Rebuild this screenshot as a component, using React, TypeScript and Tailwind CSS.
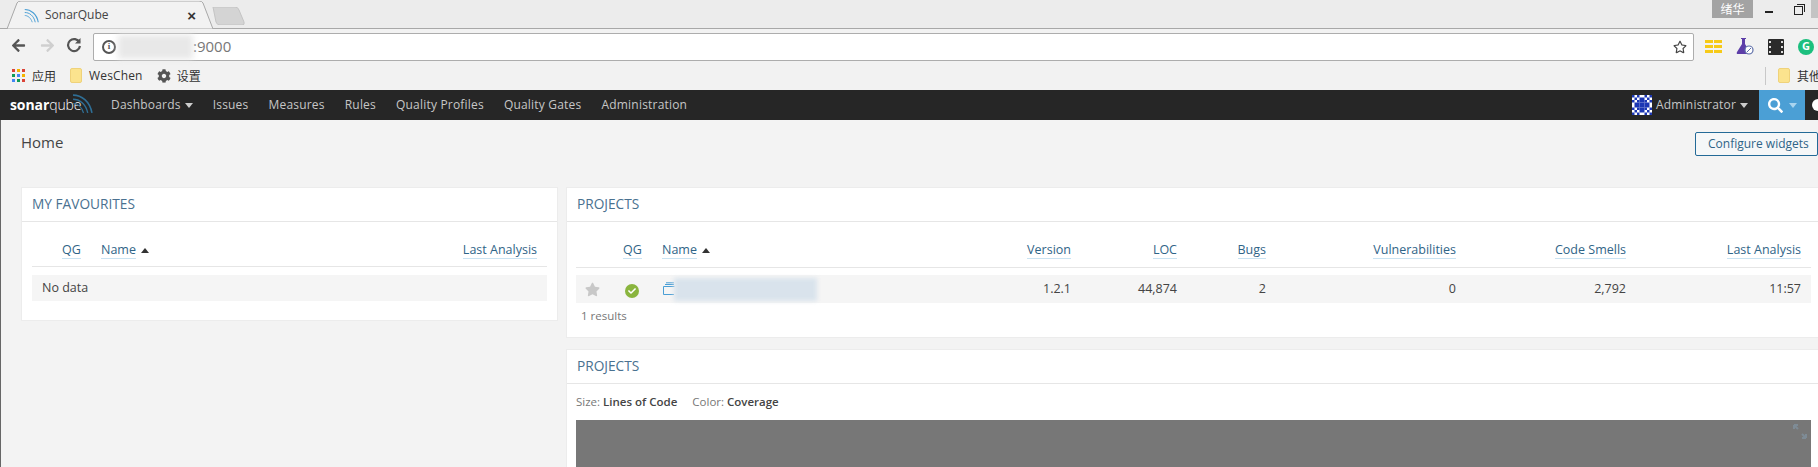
import React from "react";
import { FaArrowLeft, FaArrowRight, FaCheck, FaCog, FaRegStar, FaSearch, FaStar } from "react-icons/fa";

const OS = "font-['Open_Sans',sans-serif]";
const CJK = "font-['Noto_Sans_CJK_SC',sans-serif]";

function Caret({ up = false, color = "#ccc" }: { up?: boolean; color?: string }) {
  return (
    <svg width="8" height="5" viewBox="0 0 8 5" className="shrink-0">
      <path d={up ? "M0 5 L4 0 L8 5 Z" : "M0 0 L8 0 L4 5 Z"} fill={color} />
    </svg>
  );
}

function Arcs({ size, color }: { size: number; color: string }) {
  return (
    <svg width={size} height={size} viewBox="0 0 20 20" fill="none" stroke={color}>
      <path d="M1 2 C9 2 17 8 19 19" strokeWidth="1.5" />
      <path d="M1 6 C7 6 13 10 15 19" strokeWidth="1.3" />
      <path d="M1 10 C5 10 9 13 11 19" strokeWidth="1.1" />
    </svg>
  );
}

function Folder({ className = "" }: { className?: string }) {
  return <div className={`w-[12px] h-[15px] rounded-[2px] bg-[#fbe38e] border border-[#efd27a] ${className}`} />;
}

function Avatar() {
  const cells: React.ReactNode[] = [];
  const map = ["10100101", "01011010", "10111101", "01111110", "01111110", "10111101", "01011010", "10100101"];
  map.forEach((row, y) =>
    row.split("").forEach((c, x) => {
      if (c === "1") cells.push(<rect key={`${x}-${y}`} x={x * 2.5} y={y * 2.5} width="2.5" height="2.5" fill="#1c37b4" />);
    })
  );
  return (
    <svg width="20" height="20" viewBox="0 0 20 20" className="bg-white shrink-0">
      {cells}
    </svg>
  );
}

function TableHead({ children }: { children: React.ReactNode }) {
  return <span className="text-[#2f6487] border-b border-[#cae3f2] leading-[17px]">{children}</span>;
}

function Card({ title, className = "", children }: { title: string; className?: string; children: React.ReactNode }) {
  return (
    <section className={`bg-white border border-[#ececec] ${className}`}>
      <div className="h-[34px] border-b border-[#e6e6e6] pl-[10px] flex items-center text-[13.7px] text-[#4a7190] uppercase">
        {title}
      </div>
      {children}
    </section>
  );
}

function ChromeBars() {
  return (
    <header className="shrink-0">
      <div className="h-[29px] bg-[#ececec] border-b border-[#a8a8a8] flex">
        <div className="relative ml-[7px] w-[206px] h-[28px] mt-px flex items-center pl-[17px]">
          <svg className="absolute inset-0" width="206" height="28" viewBox="0 0 206 28">
            <path d="M0 28 L10 2 Q11 0 14 0 L192 0 Q195 0 196 2 L206 28 Z" fill="#f2f2f2" stroke="#a8a8a8" />
          </svg>
          <div className="relative flex items-center gap-[6px] w-full">
            <Arcs size={15} color="#4b9fd5" />
            <span className={`${OS} text-[12px] text-[#444]`}>SonarQube</span>
            <span className="ml-auto mr-[17px] text-[#333] text-[15px] font-bold leading-none font-['Liberation_Sans',sans-serif]">×</span>
          </div>
        </div>
        <svg width="36" height="18" viewBox="0 0 36 18" className="mt-[7px] -ml-[2px]">
          <path d="M2 0 L24 0 Q27 0 28 3 L33 15 Q34 18 31 18 L9 18 Q6 18 5 15 Z" fill="#d4d4d4" stroke="#c4c4c4" />
        </svg>
        <div className="ml-auto flex h-[18px]">
          <div className={`w-[41px] bg-[#a3a3a3] flex items-center justify-center text-[12px] text-white ${CJK}`}>绪华</div>
          <div className="w-[32px] flex items-center justify-center">
            <div className="w-[8px] h-[2px] bg-[#222] translate-y-[3px]" />
          </div>
          <div className="w-[26px] flex items-center justify-center">
            <div className="relative w-[9px] h-[9px] border border-[#222] translate-y-[1px]">
              <div className="absolute -top-[3px] -right-[3px] w-[8px] h-[8px] border-t border-r border-[#222]" />
            </div>
          </div>
          <div className="w-[7px] bg-[#c4c4c4]" />
        </div>
      </div>
      <div className="h-[32px] bg-[#f2f2f2] flex items-center">
        <div className="w-[93px] flex items-center text-[15px] pl-[11px] gap-[14px]">
          <FaArrowLeft className="text-[#555]" />
          <FaArrowRight className="text-[#cfcfcf]" />
          <svg width="16" height="16" viewBox="0 0 16 16" fill="none" stroke="#555" strokeWidth="2.2" className="-ml-[3px]">
            <path d="M13.5 5.5 A6 6 0 1 0 14 9" />
            <path d="M14.5 1 V6.5 H9" fill="#555" stroke="none" />
          </svg>
        </div>
        <div className="relative w-[1601px] h-[28px] mt-[3px] bg-white border border-[#adadad] rounded-[2px] flex items-center pl-[8px]">
          <div className="w-[14px] h-[14px] rounded-full border-2 border-[#555] flex items-center justify-center text-[9px] font-bold text-[#555] leading-none font-['Liberation_Serif',serif]">i</div>
          <div className="w-[75px] h-[24px] ml-[2px] bg-[#e8e8e8] blur-[3px] shrink-0" />
          <span className={`${OS} text-[15px] text-[#777]`}>:9000</span>
          <FaRegStar className="absolute right-[6px] top-[6px] text-[14px] text-[#444]" />
        </div>
        <div className="flex-1 relative h-[20px] mt-[3px]">
          <div className="flex items-center pl-[11px] h-full gap-[14px]">
            <svg width="17" height="13" viewBox="0 0 17 13" fill="#f6ca18" className="shrink-0">
              <rect x="0" y="0" width="8" height="3" />
              <rect x="9" y="0" width="8" height="3" />
              <rect x="0" y="5" width="8" height="3" />
              <rect x="9" y="5" width="8" height="3" />
              <rect x="0" y="10" width="8" height="3" />
              <rect x="9" y="10" width="8" height="3" />
            </svg>
            <svg width="18" height="17" viewBox="0 0 18 17" className="shrink-0">
              <path d="M5 0 H10 V1 H9 V6 L14 14 Q15 16 13 16 H2 Q0 16 1 14 L6 6 V1 H5 Z" fill="#5d3ea8" />
              <circle cx="13" cy="12" r="4" fill="#fff" stroke="#5d6ea8" strokeWidth="1.2" />
              <path d="M11 14 L15 10" stroke="#5d6ea8" />
            </svg>
            <svg width="16" height="16" viewBox="0 0 16 16" className="shrink-0">
              <rect width="16" height="16" rx="1" fill="#2b2b2b" />
              <g fill="#ddd">
                <rect x="1" y="2" width="2" height="2" />
                <rect x="1" y="7" width="2" height="2" />
                <rect x="1" y="12" width="2" height="2" />
                <rect x="13" y="2" width="2" height="2" />
                <rect x="13" y="7" width="2" height="2" />
                <rect x="13" y="12" width="2" height="2" />
              </g>
            </svg>
            <div className={`w-[16px] h-[16px] rounded-full bg-[#1cbf7e] flex items-center justify-center text-white text-[11px] font-bold shrink-0 ${OS}`}>G</div>
          </div>
        </div>
      </div>
      <div className="h-[29px] bg-[#f2f2f2] flex items-center pl-[12px] text-[12px] text-[#333]">
        <svg width="13" height="13" viewBox="0 0 13 13" className="shrink-0">
          {["#db4437", "#f4b400", "#db4437", "#0f9d58", "#4285f4", "#f4b400", "#4285f4", "#0f9d58", "#db4437"].map((c, i) => (
            <rect key={i} x={(i % 3) * 5} y={Math.floor(i / 3) * 5} width="3" height="3" fill={c} />
          ))}
        </svg>
        <span className={`ml-[7px] ${CJK}`}>应用</span>
        <Folder className="ml-[14px]" />
        <span className={`ml-[7px] tracking-[0.15px] ${OS}`}>WesChen</span>
        <FaCog className="ml-[14px] text-[14px] text-[#555]" />
        <span className={`ml-[6px] ${CJK}`}>设置</span>
        <div className="ml-auto flex items-center">
          <div className="w-px h-[18px] bg-[#c8c8c8]" />
          <Folder className="ml-[12px]" />
          <span className={`ml-[7px] whitespace-nowrap w-[21px] overflow-hidden ${CJK}`}>其他</span>
        </div>
      </div>
    </header>
  );
}

function NavBar() {
  const items = ["Issues", "Measures", "Rules", "Quality Profiles", "Quality Gates", "Administration"];
  return (
    <nav className={`h-[30px] bg-[#262626] flex items-center shrink-0 text-[12px] tracking-[0.2px] text-[#c6c6c6] ${OS}`}>
      <div className="relative w-[111px] pl-[10px] h-full flex items-center">
        <span className="text-[14px] leading-none text-white tracking-[-0.1px] pb-[1px]">
          <span className="font-bold">sonar</span>
          <span className="font-light">qube</span>
        </span>
        <div className="absolute left-[72px] top-[3px]">
          <Arcs size={21} color="#2f6f96" />
        </div>
      </div>
      <span className="flex items-center gap-[4px]">
        Dashboards <Caret />
      </span>
      <div className="flex gap-[20px] ml-[20px]">
        {items.map((t) => (
          <span key={t}>{t}</span>
        ))}
      </div>
      <div className="ml-auto flex items-center h-full">
        <Avatar />
        <span className="ml-[4px]">Administrator</span>
        <span className="ml-[4px]">
          <Caret />
        </span>
        <div className="ml-[11px] w-[46px] h-full bg-[#4b9fd5] flex items-center pl-[9px] gap-[6px]">
          <FaSearch className="text-white text-[15px]" />
          <Caret color="#a9d4ef" />
        </div>
        <div className="w-[13px] h-full flex items-center justify-end overflow-hidden">
          <div className="w-[12px] h-[12px] rounded-full bg-white translate-x-[6px] shrink-0" />
        </div>
      </div>
    </nav>
  );
}

function Dashboard() {
  return (
    <main className={`flex-1 min-h-0 bg-[#f3f3f3] border-l border-[#666] ${OS} text-[12.5px] text-[#444]`}>
      <div className="h-[67px] pl-[20px] flex items-start justify-between">
        <h1 className="text-[15px] font-normal leading-[20px] mt-[12px]">Home</h1>
        <button className="mt-[12px] h-[24px] w-[123px] shrink-0 pl-[12px] text-left bg-[#f5f7f8] border border-[#236a97] rounded-[2px] text-[#2f6487] text-[12px] whitespace-nowrap">
          Configure widgets
        </button>
      </div>
      <div className="flex items-start pl-[20px] gap-[8px]">
        <Card title="My Favourites" className="w-[537px] h-[134px] shrink-0">
          <div className="px-[10px]">
            <div className="h-[45px] pt-[19px] flex border-b border-[#e6e6e6] items-start">
              <div className="ml-[30px] w-[39px]"><TableHead>QG</TableHead></div>
              <div className="flex items-center gap-[5px]"><TableHead>Name</TableHead><Caret up color="#333" /></div>
              <div className="ml-auto pr-[10px]"><TableHead>Last Analysis</TableHead></div>
            </div>
            <div className="mt-[8px] h-[26px] bg-[#f5f5f5] pl-[10px] flex items-center">No data</div>
          </div>
        </Card>
        <div className="flex-1 flex flex-col gap-[11px] min-w-0">
          <Card title="Projects" className="h-[151px] border-r-0">
            <div className="pl-[9px] pr-[7px]">
              <div className="grid grid-cols-[47px_39px_338px_81px_106px_89px_190px_170px_175px] h-[46px] pt-[19px] border-b border-[#e6e6e6] items-start">
                <div />
                <div><TableHead>QG</TableHead></div>
                <div className="flex items-center gap-[5px]"><TableHead>Name</TableHead><Caret up color="#333" /></div>
                {["Version", "LOC", "Bugs", "Vulnerabilities", "Code Smells", "Last Analysis"].map((t) => (
                  <div key={t} className="text-right pr-[10px]"><TableHead>{t}</TableHead></div>
                ))}
              </div>
              <div className="grid grid-cols-[47px_39px_338px_81px_106px_89px_190px_170px_175px] mt-[7px] h-[28px] bg-[#f5f5f5] items-center">
                <div className="pl-[9px]"><FaStar className="text-[15px] text-[#c8c8c8]" /></div>
                <div className="pl-[2px]">
                  <div className="w-[14px] h-[14px] mt-[3px] rounded-full bg-[#8ab53e] flex items-center justify-center">
                    <FaCheck className="text-white text-[8px]" />
                  </div>
                </div>
                <div className="flex items-center">
                  <svg width="14" height="14" viewBox="0 0 14 14" fill="none" stroke="#4b9fd5" className="shrink-0">
                    <path d="M1.5 4.5 H12.5 M1.5 4.5 V12.5 H12" />
                    <path d="M3 2.5 H12 M4 0.8 H12" />
                  </svg>
                  <div className="w-[143px] h-[23px] -ml-[2px] bg-[#d9e3ec] blur-[2px]" />
                </div>
                {["1.2.1", "44,874", "2", "0", "2,792", "11:57"].map((t) => (
                  <div key={t} className="text-right pr-[10px]">{t}</div>
                ))}
              </div>
              <div className="mt-[3px] pl-[5px] text-[11.5px] text-[#777] leading-[20px]">1 results</div>
            </div>
          </Card>
          <Card title="Projects" className="border-r-0 h-[130px]">
            <div className="pl-[9px] pr-[7px]">
              <div className="h-[36px] flex items-center gap-[15px] text-[11.5px] text-[#777]">
                <span>Size: <span className="font-semibold text-[#444]">Lines of Code</span></span>
                <span>Color: <span className="font-semibold text-[#444]">Coverage</span></span>
              </div>
              <div className="relative h-[60px] bg-[#777]">
                <svg width="16" height="17" viewBox="0 0 16 17" fill="none" stroke="#7e8b95" strokeWidth="2" className="absolute right-[3px] top-[3px]">
                  <path d="M2 2 L6 6 M2 2 H6 M2 2 V6 M14 15 L10 11 M14 15 H10 M14 15 V11" />
                </svg>
              </div>
            </div>
          </Card>
        </div>
      </div>
    </main>
  );
}

export default function App() {
  return (
    <div className="w-[1818px] h-[467px] overflow-hidden flex flex-col bg-[#f3f3f3]">
      <ChromeBars />
      <NavBar />
      <Dashboard />
    </div>
  );
}
